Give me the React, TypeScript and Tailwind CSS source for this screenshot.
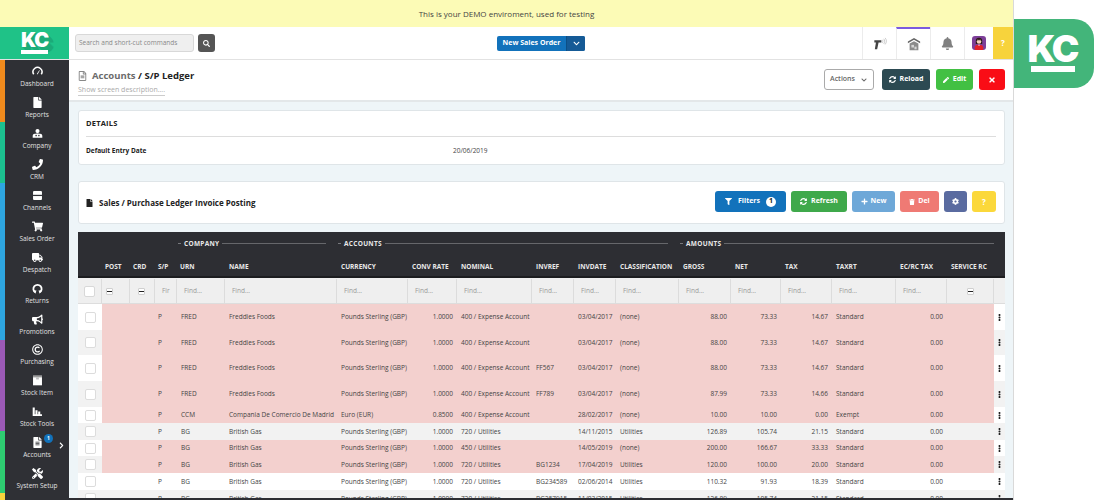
import React from "react";
import {
  FaFile, FaPhone, FaShoppingCart, FaTruck, FaBullhorn,
  FaRegCopyright, FaFileAlt, FaTools, FaSearch, FaChevronDown, FaChevronRight,
  FaSyncAlt, FaPen, FaTimes, FaFilter, FaPlus, FaTrash, FaCog, FaEllipsisV, FaBell, FaRegFileAlt,
} from "react-icons/fa";

const cols = "grid grid-cols-[24px_28px_25px_22px_48px_112px_71px_49px_75px_42px_42px_63px_52px_50px_51px_64px_51px_47px_11px]";

type IconProps = { className?: string };

const Gauge = ({ className }: IconProps) => (
  <svg viewBox="0 0 16 16" className={className}>
    <path d="M2.500 12a6.500 6.500 0 1 1 11 0" fill="none" stroke="currentColor" strokeWidth="2.200" />
    <path d="M7 11.500 10.500 6l.8.5-3 5.500a1 1 0 0 1-1.300-.5z" fill="currentColor" />
  </svg>
);
const CompanyIcon = ({ className }: IconProps) => (
  <svg viewBox="0 0 16 16" className={className}>
    <circle cx="8" cy="4.500" r="3" fill="currentColor" />
    <path d="M1 14v-2.500C1 9.500 2.500 8.500 4 8.500c1 0 1.500-.5 4-.5s3 .5 4 .5c1.500 0 3 1 3 3V14z" fill="currentColor" />
    <rect x="5" y="10" width="2" height="2" fill="#2f3035" />
    <rect x="9" y="10" width="2" height="2" fill="#2f3035" />
  </svg>
);
const ChannelIcon = ({ className }: IconProps) => (
  <svg viewBox="0 0 16 16" className={className}>
    <rect x="1.500" y="1.500" width="13" height="13" rx="1.500" fill="currentColor" />
    <rect x="1.500" y="7" width="13" height="1.800" fill="#2f3035" />
  </svg>
);
const ReturnIcon = ({ className }: IconProps) => (
  <svg viewBox="0 0 16 16" className={className}>
    <path d="M4.500 13.500a6 6 0 1 1 7 0" fill="none" stroke="currentColor" strokeWidth="2.600" />
    <path d="M1.800 10.500 6.500 10.800 5 15.500zM14.200 10.500 9.500 10.800l1.500 4.700z" fill="currentColor" />
  </svg>
);
const StockIcon = ({ className }: IconProps) => (
  <svg viewBox="0 0 16 16" className={className}>
    <rect x="1.500" y="1" width="13" height="14" fill="currentColor" />
    <rect x="1.500" y="1" width="13" height="2.500" fill="#9a9a9a" />
    <rect x="6" y="3.500" width="4" height="3" fill="#bdbdbd" />
  </svg>
);
const BarsIcon = ({ className }: IconProps) => (
  <svg viewBox="0 0 16 16" className={className}>
    <path d="M1 2h3v10h1V6h3v6h1V8h3v4h2.500v2.500H1z" fill="currentColor" />
  </svg>
);

const nav = [
  ["Dashboard", Gauge], ["Reports", FaFile], ["Company", CompanyIcon], ["CRM", FaPhone], ["Channels", ChannelIcon],
  ["Sales Order", FaShoppingCart], ["Despatch", FaTruck], ["Returns", ReturnIcon], ["Promotions", FaBullhorn],
  ["Purchasing", FaRegCopyright], ["Stock Item", StockIcon], ["Stock Tools", BarsIcon], ["Accounts", FaFileAlt], ["System Setup", FaTools],
] as const;

const heads = ["", "POST", "CRD", "S/P", "URN", "NAME", "CURRENCY", "CONV RATE", "NOMINAL", "INVREF", "INVDATE", "CLASSIFICATION", "GROSS", "NET", "TAX", "TAXRT", "EC/RC TAX", "SERVICE RC", ""];

type Row = { h: string; pink: boolean; grey: boolean; d: string[] };
const GBP = "Pounds Sterling (GBP)";
const rows: Row[] = [
  { h: "h-[26px]", pink: true, grey: false, d: ["FRED", "Freddies Foods", GBP, "1.0000", "400 / Expense Account", "", "03/04/2017", "(none)", "88.00", "73.33", "14.67", "Standard"] },
  { h: "h-[25px]", pink: true, grey: true, d: ["FRED", "Freddies Foods", GBP, "1.0000", "400 / Expense Account", "", "03/04/2017", "(none)", "88.00", "73.33", "14.67", "Standard"] },
  { h: "h-[26px]", pink: true, grey: false, d: ["FRED", "Freddies Foods", GBP, "1.0000", "400 / Expense Account", "FF567", "03/04/2017", "(none)", "88.00", "73.33", "14.67", "Standard"] },
  { h: "h-[26px]", pink: true, grey: true, d: ["FRED", "Freddies Foods", GBP, "1.0000", "400 / Expense Account", "FF789", "03/04/2017", "(none)", "87.99", "73.33", "14.66", "Standard"] },
  { h: "h-[16px]", pink: true, grey: false, d: ["CCM", "Compania De Comercio De Madrid", "Euro (EUR)", "0.8500", "400 / Expense Account", "", "28/02/2017", "(none)", "10.00", "10.00", "0.00", "Exempt"] },
  { h: "h-[17px]", pink: false, grey: true, d: ["BG", "British Gas", GBP, "1.0000", "720 / Utilities", "", "14/11/2015", "Utilities", "126.89", "105.74", "21.15", "Standard"] },
  { h: "h-[16px]", pink: true, grey: false, d: ["BG", "British Gas", GBP, "1.0000", "450 / Utilities", "", "14/05/2019", "(none)", "200.00", "166.67", "33.33", "Standard"] },
  { h: "h-[17px]", pink: true, grey: true, d: ["BG", "British Gas", GBP, "1.0000", "720 / Utilities", "BG1234", "17/04/2019", "Utilities", "120.00", "100.00", "20.00", "Standard"] },
  { h: "h-[17px]", pink: false, grey: false, d: ["BG", "British Gas", GBP, "1.0000", "720 / Utilities", "BG234589", "02/06/2014", "Utilities", "110.32", "91.93", "18.39", "Standard"] },
  { h: "h-[17px]", pink: false, grey: true, d: ["BG", "British Gas", GBP, "1.0000", "720 / Utilities", "BG257915", "11/03/2015", "Utilities", "126.89", "105.74", "21.15", "Standard"] },
];

function Minus() {
  return <span className="flex h-[7px] w-[7px] items-center justify-center rounded-[1px] border border-[#cfcfcf] bg-white"><span className="h-px w-[5px] bg-[#222]" /></span>;
}

function Group({ label, span }: { label: string; span: string }) {
  return (
    <div className={`${span} flex items-center gap-[3px] pl-px pr-[11px]`}>
      <span className="h-px w-[3px] bg-[#77787c]" />
      <span className="text-[6.5px] font-bold tracking-[0.3px] text-[#e8e8e8]">{label}</span>
      <span className="h-px flex-1 bg-[#66676b]" />
    </div>
  );
}

function Btn({ cls, children }: { cls: string; children: React.ReactNode }) {
  return <button className={`flex items-center justify-center rounded-[3px] text-[7px] font-bold text-white ${cls}`}>{children}</button>;
}

export default function App() {
  return (
    <div className="flex h-[500px] w-[1106px] overflow-hidden bg-white font-['Open_Sans',sans-serif]">
      <div className="flex h-full w-[1014px] flex-col border-r border-[#d9d9d9]">
        <div className="flex h-[27px] shrink-0 items-center justify-center bg-[#fcfbb6] text-[8px] text-[#444]">This is your DEMO enviroment, used for testing</div>

        <div className="flex h-[33px] shrink-0 border-b border-[#e2e2e2]">
          <div className="flex w-[69px] shrink-0 flex-col items-center justify-center bg-[#1fc287]">
            <span className="font-['Inter',sans-serif] text-[20px] font-black leading-[17px] tracking-[-1px] text-white [text-shadow:1px_1px_0_#1bab78,2px_2px_0_#1bab78,3px_3px_0_#1bab78,4px_4px_0_#1bab78,5px_5px_0_#1bab78]">KC</span>
            <span className="mt-px h-[4px] w-[27px] bg-white" />
          </div>
          <div className="relative flex flex-1 items-center">
            <div className="ml-[6px] flex h-[18px] w-[119px] items-center rounded-[3px] border border-[#d8d8d8] bg-[#efefef] pl-[3px] text-[6.5px] text-[#888]">Search and short-cut commands</div>
            <button className="ml-[4px] flex h-[18px] w-[17px] items-center justify-center rounded-[3px] bg-[#555] text-white"><FaSearch className="h-[7px] w-[7px]" /></button>
            <div className="ml-[282px] flex h-[15px] w-[88px] overflow-hidden rounded-[2px] bg-[#1272bb] text-[7px] font-bold text-white">
              <span className="flex flex-1 items-center justify-center">New Sales Order</span>
              <span className="flex w-[19px] items-center justify-center border-l border-[#0c4f86] bg-[#155a96]"><FaChevronDown className="h-[7px] w-[7px]" /></span>
            </div>
            <div className="ml-auto flex h-full">
              <div className="flex w-[34px] items-center justify-center border-l border-[#ececec]">
                <svg viewBox="0 0 16 16" className="h-[15px] w-[15px]">
                  <path d="M2.500 4.500h7.500v2.500H7L5.500 14H3l1.200-7H2.500z" fill="#444" />
                  <path d="M11 4c.8 1 .8 2.500 0 3.500M12.500 3c1.300 1.500 1.300 4 0 5.500M14 2c1.800 2 1.800 5 0 7" stroke="#bdbdbd" strokeWidth="0.800" fill="none" />
                </svg>
              </div>
              <div className="flex w-[34px] items-center justify-center border-l border-t-2 border-[#ececec] border-t-[#7a5be0]">
                <svg viewBox="0 0 16 16" className="h-[14px] w-[14px]">
                  <path d="M8 1 1 5v2l7-4 7 4V5z" fill="#666" />
                  <path d="M3 7.500 8 4.800l5 2.700V15H3z" fill="#8b8b8b" />
                  <rect x="5" y="9" width="3" height="3" fill="#d5d5d5" />
                  <rect x="8.500" y="11" width="2.500" height="3" fill="#d5d5d5" />
                </svg>
              </div>
              <div className="flex w-[34px] items-center justify-center border-l border-[#ececec] text-[#808080]"><FaBell className="h-[13px] w-[13px]" /></div>
              <div className="flex w-[29px] items-center justify-center border-l border-[#ececec]">
                <svg viewBox="0 0 14 14" className="h-[14px] w-[14px]">
                  <rect width="14" height="14" rx="3" fill="#7d3f98" />
                  <path d="M3.800 8V5a3.200 3.200 0 0 1 6.400 0v3z" fill="#2c1a18" />
                  <circle cx="7" cy="5.500" r="2.300" fill="#f5d2ba" />
                  <path d="M4.700 4.600a2.400 2.400 0 0 1 4.600 0C8 4.200 6 4.200 4.700 4.600z" fill="#2c1a18" />
                  <path d="M2.800 14v-2.800C2.800 9.500 4.800 8.700 7 8.700s4.200.8 4.200 2.500V14z" fill="#e2222a" />
                  <path d="M6 8.700 7 10l1-1.300z" fill="#fff" />
                </svg>
              </div>
              <div className="flex w-[20px] items-center justify-center bg-[#f7d33c] text-[8px] font-bold text-white">?</div>
            </div>
          </div>
        </div>

        <div className="flex min-h-0 flex-1">
          <nav className="flex w-[69px] shrink-0 bg-[#2f3035]">
            <div className="flex w-[5px] shrink-0 flex-col">
              <div className="h-[62px] bg-[#f08a1d]" />
              <div className="h-[61px] bg-[#1cc08f]" />
              <div className="h-[157px] bg-[#2ea5e0]" />
              <div className="h-[91px] bg-[#9b59b6]" />
              <div className="h-[62px] bg-[#2ecc71]" />
              <div className="flex-1 bg-[#f7d33c]" />
            </div>
            <div className="flex flex-1 flex-col pt-[6px]">
              {nav.map(([label, Icon]) => (
                <div key={label} className="relative flex h-[30.95px] shrink-0 flex-col items-center text-white">
                  <Icon className="h-[11px] w-[11px]" />
                  <span className="mt-[2px] text-[6.5px] leading-[9px] text-[#e0e0e0]">{label}</span>
                  {label === "Accounts" && (
                    <>
                      <span className="absolute left-[39px] top-[-3px] flex h-[9px] w-[9px] items-center justify-center rounded-full bg-[#1272bb] text-[5px] font-bold">1</span>
                      <FaChevronRight className="absolute left-[53px] top-[5px] h-[7px] w-[7px]" />
                    </>
                  )}
                </div>
              ))}
            </div>
          </nav>

          <main className="flex min-w-0 flex-1 flex-col bg-[#eef5f8]">
            <div className="flex h-[42px] shrink-0 items-start justify-between border-b-2 border-[#e3e7e9] bg-white pl-[9px] pr-[8px]">
              <div className="pt-[9px]">
                <div className="flex items-center gap-[5px] text-[9.500px] font-bold leading-[13px]">
                  <FaRegFileAlt className="h-[10px] w-[9px] text-[#888]" />
                  <span><span className="text-[#6b6b6b]">Accounts</span><span className="text-[#222]"> / S/P Ledger</span></span>
                </div>
                <div className="mt-[3px] w-fit border-b border-[#ccc] text-[7px] leading-[10px] text-[#aaa]">Show screen description....</div>
              </div>
              <div className="flex items-center pt-[9px]">
                <div className="flex h-[21px] w-[50px] items-center justify-center gap-[5px] rounded-[3px] border border-[#aaa] bg-white text-[7px] font-semibold text-[#666]">Actions <FaChevronDown className="h-[6px] w-[8px]" /></div>
                <Btn cls="ml-[8px] h-[21px] w-[48px] gap-[4px] bg-[#2c4a52]"><FaSyncAlt className="h-[7px] w-[7px]" />Reload</Btn>
                <Btn cls="ml-[6px] h-[21px] w-[37px] gap-[4px] bg-[#42c043]"><FaPen className="h-[6px] w-[6px]" />Edit</Btn>
                <Btn cls="ml-[6px] h-[21px] w-[26px] bg-[#f90d16]"><FaTimes className="h-[8px] w-[8px]" /></Btn>
              </div>
            </div>

            <div className="ml-[9px] mr-[8px] mt-[8px] h-[55px] shrink-0 rounded-[3px] border border-[#dfe5e8] bg-white pl-[7px] pr-[8px]">
              <div className="flex h-[26px] items-center border-b border-[#ddd] text-[7.5px] font-bold tracking-[0.2px] text-[#222]">DETAILS</div>
              <div className="flex h-[27px] items-center pt-px text-[6.5px]">
                <span className="w-[367px] font-bold text-[#222]">Default Entry Date</span>
                <span className="text-[#444]">20/06/2019</span>
              </div>
            </div>

            <div className="ml-[9px] mr-[8px] mt-[16px] flex h-[43px] shrink-0 items-center rounded-[3px] border border-[#dfe5e8] bg-white pl-[7px] pr-[8px]">
              <FaFile className="h-[8px] w-[7px] text-[#222]" />
              <span className="ml-[6px] text-[8px] font-bold text-[#222]">Sales / Purchase Ledger Invoice Posting</span>
              <div className="mb-[2px] ml-auto flex gap-[5px]">
                <Btn cls="h-[21px] w-[71px] gap-[6px] bg-[#1272bb]"><FaFilter className="h-[7px] w-[7px]" />Filters<span className="flex h-[10px] w-[10px] items-center justify-center rounded-full bg-white text-[7px] text-[#222]">1</span></Btn>
                <Btn cls="h-[21px] w-[56px] gap-[4px] bg-[#3fa94b]"><FaSyncAlt className="h-[7px] w-[7px]" />Refresh</Btn>
                <Btn cls="h-[21px] w-[43px] gap-[3px] bg-[#6ea8d8]"><FaPlus className="h-[7px] w-[7px]" />New</Btn>
                <Btn cls="h-[21px] w-[39px] gap-[3px] bg-[#ef7a74]"><FaTrash className="h-[6px] w-[6px]" />Del</Btn>
                <Btn cls="h-[21px] w-[23px] bg-[#5a6ba0]"><FaCog className="h-[7px] w-[7px]" /></Btn>
                <Btn cls="h-[21px] w-[24px] bg-[#fbd83b] text-[8px]">?</Btn>
              </div>
            </div>

            <div className="ml-[9px] mr-[8px] mt-[8px] min-h-0 flex-1 overflow-hidden">
              <div className="h-[46px] border-b-2 border-[#1c1d20] bg-[#2d2e33] pt-[6px]">
                <div className={`${cols} h-[11px]`}>
                  <div className="col-span-4" />
                  <Group label="COMPANY" span="col-span-2" />
                  <Group label="ACCOUNTS" span="col-span-6" />
                  <Group label="AMOUNTS" span="col-span-7" />
                </div>
                <div className={`${cols} mt-[13px]`}>
                  {heads.map((h, i) => (
                    <div key={i} className="whitespace-nowrap pl-[3px] text-[6.5px] font-bold leading-[10px] text-[#e8e8e8] nth-[n+6]:pl-[4px]">{h}</div>
                  ))}
                </div>
              </div>

              <div className={`${cols} h-[26px] border-b border-[#ddd] bg-[#efefef] pt-px`}>
                {heads.map((h, i) => {
                  const base = "flex items-center border-r border-[#dcdcdc]";
                  if (i === 0) return <div key={i} className={`${base} justify-center`}><span className="h-[11px] w-[11px] rounded-[2px] border border-[#d8d8d8] bg-white" /></div>;
                  if (i === 1 || i === 2) return <div key={i} className={`${base} ${i === 1 ? "pl-[4px]" : "pl-[8px]"}`}><Minus /></div>;
                  if (i === 17) return <div key={i} className={`${base} justify-center`}><Minus /></div>;
                  if (i === 18) return <div key={i} />;
                  if (i === 3) return <div key={i} className={`${base} pl-[7px] text-[6.5px] text-[#999]`}>Fir</div>;
                  return <div key={i} className={`${base} pl-[7px] text-[6.5px] text-[#999]`}>Find...</div>;
                })}
              </div>

              {rows.map((r, ri) => {
                const side = r.grey ? "bg-[#f2f2f2]" : "bg-white";
                const body = r.pink ? "bg-[#f3d0ce]" : side;
                const d = r.d;
                const L = "overflow-visible whitespace-nowrap pl-[4px]";
                const R = "whitespace-nowrap pr-[4px] text-right";
                return (
                  <div key={ri} className={`${cols} ${r.h} items-stretch text-[6.5px] text-[#444] [&>div]:flex [&>div]:items-center`}>
                    <div className={`${side} justify-center`}><span className="h-[11px] w-[11px] rounded-[2px] border border-[#dcdcdc] bg-white" /></div>
                    <div className={`${body} col-span-2`} />
                    <div className={`${body} pl-[3px]`}>P</div>
                    <div className={`${body} ${L}`}>{d[0]}</div>
                    <div className={`${body} ${L}`}>{d[1]}</div>
                    <div className={`${body} ${L}`}>{d[2]}</div>
                    <div className={`${body} ${R} justify-end`}>{d[3]}</div>
                    <div className={`${body} ${L}`}>{d[4]}</div>
                    <div className={`${body} ${L}`}>{d[5]}</div>
                    <div className={`${body} ${L}`}>{d[6]}</div>
                    <div className={`${body} ${L}`}>{d[7]}</div>
                    <div className={`${body} ${R} justify-end`}>{d[8]}</div>
                    <div className={`${body} ${R} justify-end`}>{d[9]}</div>
                    <div className={`${body} ${R} justify-end`}>{d[10]}</div>
                    <div className={`${body} ${L}`}>{d[11]}</div>
                    <div className={`${body} ${R} justify-end`}>0.00</div>
                    <div className={body} />
                    <div className={`${side} justify-center text-[#222]`}><FaEllipsisV className="h-[7px] w-[5px]" /></div>
                  </div>
                );
              })}
            </div>
            <div className="h-[2px] shrink-0 bg-[#2d2e33]" />
          </main>
        </div>
      </div>

      <div className="flex-1">
        <div className="mt-[19px] flex h-[69px] w-[80px] flex-col items-center justify-center rounded-r-[20px] bg-[#43b57a] pr-[3px]">
          <span className="font-['Inter',sans-serif] text-[37px] font-black leading-[27px] tracking-[-2px] text-white">KC</span>
          <span className="mt-[4px] h-[6px] w-[44px] bg-white" />
        </div>
      </div>
    </div>
  );
}
